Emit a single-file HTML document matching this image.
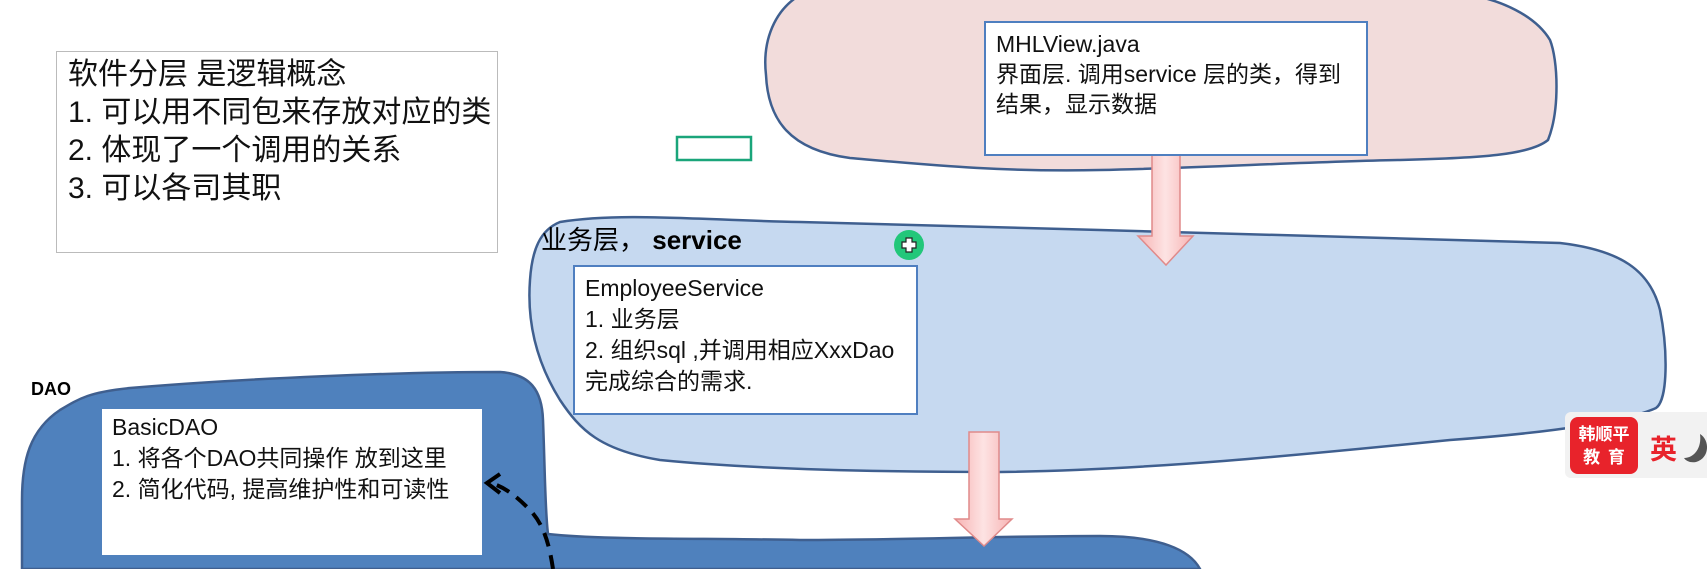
<!DOCTYPE html>
<html><head><meta charset="utf-8"><style>
body{margin:0;width:1707px;height:569px;overflow:hidden;background:#fff;position:relative;font-family:"Liberation Sans","Noto Sans CJK SC",sans-serif;}
.box{position:absolute;background:#fff;box-sizing:border-box;color:#111;}
.t{position:absolute;white-space:nowrap;}
</style></head><body>
<svg width="1707" height="569" style="position:absolute;left:0;top:0">
  <path d="M800 -5 C775 10 762 40 766 75 C768 120 790 150 850 158 C930 165 1000 172 1100 170 C1200 168 1300 162 1400 160 C1480 158 1530 155 1548 140 C1560 110 1558 60 1550 40 C1535 15 1500 0 1470 -5 Z" fill="#f2dcdb" stroke="#3f5f8f" stroke-width="2.5"/>
  <path d="M560 222 C620 212 700 220 800 222 C900 224 1000 228 1100 230 C1250 234 1400 238 1560 243 C1620 250 1650 270 1660 310 C1668 350 1668 400 1656 408 C1630 420 1560 432 1450 440 C1300 455 1150 470 1000 472 C860 472 740 468 660 460 C600 450 580 430 560 400 C535 360 527 320 530 280 C532 250 540 230 560 222 Z" fill="#c6d9f0" stroke="#3f5f8f" stroke-width="2.5"/>
  <path d="M22 569 L22 500 C22 460 30 430 60 410 C80 398 90 392 130 388 C250 378 400 372 500 372 C530 374 542 390 543 420 C545 470 545 510 548 534 C600 540 700 538 800 540 C900 540 1000 536 1100 536 C1160 536 1190 550 1200 569 Z" fill="#4f81bd" stroke="#3f5f8f" stroke-width="2.5"/>
  <defs><linearGradient id="g" x1="0" x2="1"><stop offset="0" stop-color="#f7b3b3"/><stop offset="0.5" stop-color="#fde3e3"/><stop offset="1" stop-color="#f7b3b3"/></linearGradient></defs>
  <path d="M1152 151 L1180 151 L1180 236 L1193 236 L1166 265 L1138 236 L1152 236 Z" fill="url(#g)" stroke="#e08a8a" stroke-width="1.5"/>
  <path d="M969 432 L999 432 L999 519 L1012 519 L984 546 L955 519 L969 519 Z" fill="url(#g)" stroke="#e08a8a" stroke-width="1.5"/>
  <path d="M553 569 C548 535 540 520 528 508 C515 495 505 488 494 484" fill="none" stroke="#000" stroke-width="4" stroke-dasharray="14 9"/>
  <path d="M500 474 L487 483 L500 493" fill="none" stroke="#000" stroke-width="4"/>
  <rect x="677" y="137" width="74" height="23" fill="none" stroke="#1aa57a" stroke-width="2.5"/>
  <circle cx="909" cy="245" r="15" fill="#22c77a"/>
  <path d="M906 238h6v4h4v6h-4v4h-6v-4h-4v-6h4z" fill="#fff" stroke="#222" stroke-width="1.2"/>
</svg>

<div class="box" style="left:56px;top:51px;width:442px;height:202px;border:1.5px solid #bbb;">
  <div class="t" style="left:11px;top:4px;font-size:30px;line-height:38px;color:#111;">软件分层 是逻辑概念<br>1. 可以用不同包来存放对应的类<br>2. 体现了一个调用的关系<br>3. 可以各司其职</div>
</div>

<div class="box" style="left:984px;top:21px;width:384px;height:135px;border:2.5px solid #4f7fc0;">
  <div class="t" style="left:10px;top:6px;font-size:23px;line-height:30px;">MHLView.java<br>界面层. 调用service 层的类，得到<br>结果，显示数据</div>
</div>

<div class="t" style="left:541px;top:224px;font-size:26px;line-height:32px;color:#000;">业务层， <b>service</b></div>

<div class="box" style="left:573px;top:265px;width:345px;height:150px;border:2.5px solid #4f7fc0;">
  <div class="t" style="left:10px;top:6px;font-size:23px;line-height:31px;">EmployeeService<br>1. 业务层<br>2. 组织sql ,并调用相应XxxDao<br>完成综合的需求.</div>
</div>

<div class="t" style="left:31px;top:379px;font-size:18px;font-weight:bold;color:#000;">DAO</div>

<div class="box" style="left:102px;top:409px;width:380px;height:146px;">
  <div class="t" style="left:10px;top:3px;font-size:23px;line-height:31px;">BasicDAO<br>1. 将各个DAO共同操作 放到这里<br>2. 简化代码, 提高维护性和可读性</div>
</div>

<div style="position:absolute;left:1565px;top:412px;width:142px;height:66px;background:#f2f2f2;border-radius:6px 0 0 6px;"></div>
<div style="position:absolute;left:1570px;top:417px;width:68px;height:57px;background:#e8232b;border-radius:8px;color:#fff;font-family:'Noto Sans CJK SC',sans-serif;font-weight:bold;font-size:17px;line-height:23px;text-align:center;padding-top:4px;box-sizing:border-box;">韩顺平<br>教&nbsp;&nbsp;育</div>
<div class="t" style="left:1650px;top:428px;font-size:27px;font-weight:bold;color:#e8232b;font-family:'Noto Sans CJK SC',sans-serif;">英</div>
<svg width="30" height="40" style="position:absolute;left:1682px;top:428px">
  <path d="M18 6 C28 12 28 30 14 34 C8 35 4 33 2 30 C12 30 20 20 18 6 Z" fill="#555"/>
</svg>
</body></html>
